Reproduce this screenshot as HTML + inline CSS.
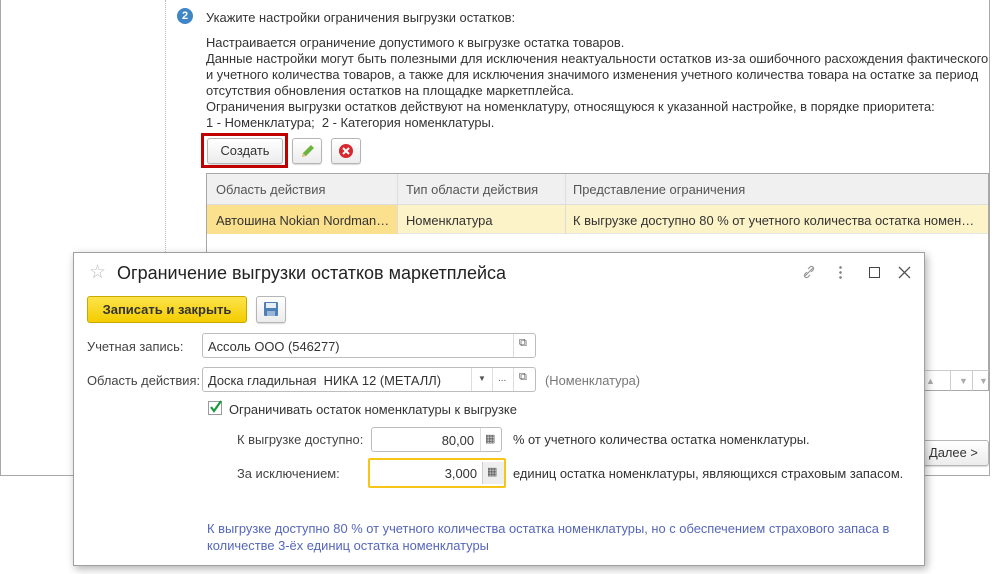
<!DOCTYPE html>
<html><head><meta charset="utf-8"><style>
*{box-sizing:border-box}
body{margin:0;width:999px;height:574px;background:#fff;font-family:"Liberation Sans",Arial,sans-serif;font-size:12.9px;color:#333;position:relative;overflow:hidden}
.a{position:absolute;white-space:nowrap}
.btn{position:absolute;border:1px solid #b5b5b5;border-radius:3px;background:linear-gradient(#fff,#ececec);box-shadow:0 1px 1px rgba(0,0,0,.15)}
.fld{position:absolute;border:1px solid #bdbdbd;border-radius:3px;background:#fff}
.sep{position:absolute;top:0;bottom:0;border-left:1px solid #ddd}
</style></head><body>
<div class="a" style="left:0;top:0;width:990px;height:476px;border:1px solid #a8a8a8;border-top:none;background:#fff"></div>
<div class="a" style="left:165px;top:0;height:476px;border-left:1px dotted #bbb"></div>
<div class="a" style="left:177px;top:8px;width:16px;height:16px;border-radius:50%;background:#3f86c6;color:#fff;font-size:11px;font-weight:bold;text-align:center;line-height:16px">2</div>
<div class="a" style="left:206px;top:10px">Укажите настройки ограничения выгрузки остатков:</div>
<div class="a" style="left:206px;top:35px;line-height:16px">Настраивается ограничение допустимого к выгрузке остатка товаров.<br>Данные настройки могут быть полезными для исключения неактуальности остатков из-за ошибочного расхождения фактического<br>и учетного количества товаров, а также для исключения значимого изменения учетного количества товара на остатке за период<br>отсутствия обновления остатков на площадке маркетплейса.<br>Ограничения выгрузки остатков действуют на номенклатуру, относящуюся к указанной настройке, в порядке приоритета:<br>1 - Номенклатура;&nbsp; 2 - Категория номенклатуры.</div>
<div class="a" style="left:201px;top:133px;width:87px;height:35px;border:3px solid #c00000"></div>
<div class="btn" style="left:207px;top:138px;width:76px;height:26px;text-align:center;line-height:24px">Создать</div>
<div class="btn" style="left:292px;top:138px;width:30px;height:26px"><svg width="28" height="24"><path d="M9 18l1-4 8-8 3 3-8 8z" fill="#6bb33a"/><path d="M9 18l1-4 3 3z" fill="#e8c07a"/></svg></div>
<div class="btn" style="left:331px;top:138px;width:30px;height:26px"><svg width="28" height="24"><circle cx="14" cy="12" r="7" fill="#d9272e"/><path d="M11 9l6 6M17 9l-6 6" stroke="#fff" stroke-width="2"/></svg></div>
<div class="a" style="left:206px;top:173px;width:783px;height:218px;border:1px solid #a8a8a8;background:#fff">
 <div class="a" style="left:0;top:0;width:781px;height:31px;background:#f0f0f0;border-bottom:1px solid #ddd"></div>
 <div class="a" style="left:0;top:31px;width:781px;height:29px;background:#fdf3c8;border-bottom:1px solid #e5e5e5"></div>
 <div class="a" style="left:0;top:31px;width:190px;height:29px;background:#fbe08d"></div>
 <div class="a" style="left:190px;top:0;height:60px;border-left:1px solid #ddd"></div>
 <div class="a" style="left:358px;top:0;height:60px;border-left:1px solid #ddd"></div>
 <div class="a" style="left:9px;top:8px;color:#555">Область действия</div>
 <div class="a" style="left:199px;top:8px;color:#555">Тип области действия</div>
 <div class="a" style="left:366px;top:8px;color:#555">Представление ограничения</div>
 <div class="a" style="left:9px;top:39px">Автошина Nokian Nordman…</div>
 <div class="a" style="left:199px;top:39px">Номенклатура</div>
 <div class="a" style="left:366px;top:39px">К выгрузке доступно 80 % от учетного количества остатка номен…</div>
 <div class="a" style="left:710px;top:196px;width:72px;height:21px;border-top:1px solid #ccc;border-left:1px solid #ccc;color:#aaa;font-size:9px;line-height:20px"><span style="position:absolute;left:8px">▲</span><span style="position:absolute;left:32px;border-left:1px solid #ccc;padding-left:8px">▼</span><span style="position:absolute;left:54px;border-left:1px solid #ccc;padding-left:6px">▼</span></div>
</div>
<div class="btn" style="left:900px;top:440px;width:89px;height:26px;line-height:24px;padding-left:28px">Далее &gt;</div>
<div class="a" style="left:73px;top:252px;width:852px;height:314px;background:#fff;border:1px solid #a0a0a0;box-shadow:2px 3px 8px rgba(0,0,0,.3)">
 <div class="a" style="left:15px;top:8px;font-size:19px;color:#bbb">☆</div>
 <div class="a" style="left:43px;top:10px;font-size:18px;color:#222">Ограничение выгрузки остатков маркетплейса</div>
 <svg class="a" style="left:727px;top:11px" width="16" height="16"><path d="M4 12l8-8M6 8l-2 2a2 2 0 0 0 3 3l2-2M10 8l2-2a2 2 0 0 0-3-3l-2 2" stroke="#999" fill="none" stroke-width="1.2"/></svg>
 <div class="a" style="left:765px;top:12px;width:3px;height:14px;background:radial-gradient(circle,#888 1.2px,transparent 1.5px) 0 0/3px 5px"></div>
 <div class="a" style="left:795px;top:14px;width:11px;height:11px;border:1.5px solid #444"></div>
 <svg class="a" style="left:824px;top:13px" width="13" height="13"><path d="M1 1l11 11M12 1L1 12" stroke="#555" stroke-width="1.3"/></svg>
 <div class="a" style="left:13px;top:43px;width:160px;height:27px;border:1px solid #c9a800;border-radius:3px;background:linear-gradient(#fde34a,#f3cc00);font-weight:bold;font-size:13px;color:#333;text-align:center;line-height:25px">Записать и закрыть</div>
 <div class="btn" style="left:182px;top:43px;width:30px;height:27px"><svg width="28" height="25"><rect x="7" y="5" width="14" height="14" rx="1" fill="#4d7fb8"/><rect x="9" y="6" width="10" height="5" fill="#e8eef6"/><rect x="10" y="14" width="8" height="5" fill="#9ab5d6"/></svg></div>
 <div class="a" style="left:13px;top:86px;color:#444">Учетная запись:</div>
 <div class="fld" style="left:128px;top:80px;width:334px;height:25px"><div class="a" style="left:5px;top:5px">Ассоль ООО (546277)</div><div class="sep" style="left:310px"></div><div class="a" style="left:316px;top:3px;font-size:11px;color:#555">⧉</div></div>
 <div class="a" style="left:13px;top:120px;color:#444">Область действия:</div>
 <div class="fld" style="left:128px;top:114px;width:334px;height:25px"><div class="a" style="left:5px;top:5px">Доска гладильная&nbsp; НИКА 12 (МЕТАЛЛ)</div><div class="sep" style="left:268px"></div><div class="sep" style="left:289px"></div><div class="sep" style="left:310px"></div><div class="a" style="left:275px;top:6px;font-size:8px;color:#555">▼</div><div class="a" style="left:295px;top:5px;font-size:10px;color:#555">...</div><div class="a" style="left:316px;top:3px;font-size:11px;color:#555">⧉</div></div>
 <div class="a" style="left:471px;top:120px;color:#777">(Номенклатура)</div>
 <div class="a" style="left:134px;top:148px;width:14px;height:14px;border:1px solid #999;background:#fff"><svg width="14" height="14" style="position:absolute;left:0;top:-2px"><path d="M2 7l3 4 7-10" stroke="#1a9a3a" stroke-width="2.2" fill="none"/></svg></div>
 <div class="a" style="left:155px;top:149px">Ограничивать остаток номенклатуры к выгрузке</div>
 <div class="a" style="left:163px;top:179px;color:#444">К выгрузке доступно:</div>
 <div class="fld" style="left:297px;top:174px;width:131px;height:25px"><div class="a" style="right:27px;top:5px">80,00</div><div class="sep" style="left:108px"></div><div class="a" style="left:113px;top:4px;font-size:11px;color:#555">▦</div></div>
 <div class="a" style="left:439px;top:179px">% от учетного количества остатка номенклатуры.</div>
 <div class="a" style="left:163px;top:213px;color:#444">За исключением:</div>
 <div class="a" style="left:294px;top:205px;width:138px;height:30px;border:2px solid #f5c518;border-radius:2px"><div class="a" style="right:27px;top:6px">3,000</div><div class="a" style="left:112px;top:2px;width:22px;height:22px;background:#eee;border-left:1px solid #ccc"></div><div class="a" style="left:117px;top:5px;font-size:11px;color:#555">▦</div></div>
 <div class="a" style="left:439px;top:213px">единиц остатка номенклатуры, являющихся страховым запасом.</div>
 <div class="a" style="left:133px;top:267px;color:#5566bb;line-height:17px">К выгрузке доступно 80 % от учетного количества остатка номенклатуры, но с обеспечением страхового запаса в<br>количестве 3-ёх единиц остатка номенклатуры</div>
</div>
</body></html>
